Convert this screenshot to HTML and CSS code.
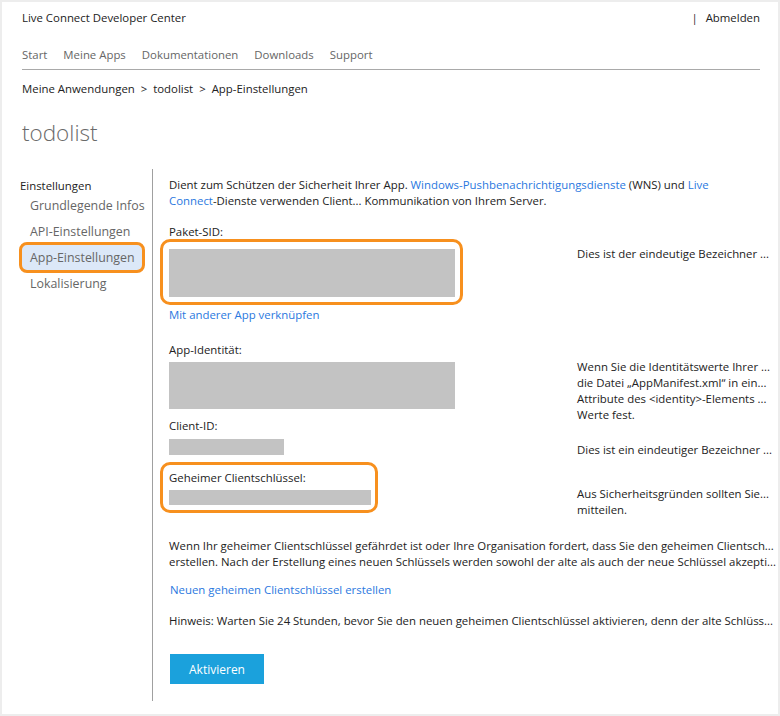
FILE: index.html
```html
<!DOCTYPE html>
<html lang="de">
<head>
<meta charset="utf-8">
<title>todolist - App-Einstellungen</title>
<link rel="stylesheet" href="styles.css">
</head>
<body>
<div class="frame">
  <header class="top">
    <span class="brand">Live Connect Developer Center</span>
    <span class="signout"><span class="sep">|</span>Abmelden</span>
  </header>
  <nav class="nav">
    <a>Start</a><a>Meine Apps</a><a>Dokumentationen</a><a>Downloads</a><a>Support</a>
  </nav>
  <div class="crumbs">Meine Anwendungen <span class="gt">&gt;</span> todolist <span class="gt">&gt;</span> App-Einstellungen</div>
  <h1 class="title">todolist</h1>
  <div class="main">
    <aside class="side">
      <div class="side-head">Einstellungen</div>
      <ul class="side-list">
        <li>Grundlegende Infos</li>
        <li>API-Einstellungen</li>
        <li class="active">App-Einstellungen</li>
        <li>Lokalisierung</li>
      </ul>
    </aside>
    <section class="content">
      <p class="intro">Dient zum Schützen der Sicherheit Ihrer App. <a class="link">Windows-Pushbenachrichtigungsdienste</a> (WNS) und <a class="link">Live<br>Connect</a>-Dienste verwenden Client... Kommunikation von Ihrem Server.</p>

      <div class="row row-sid">
        <div class="left">
          <div class="label">Paket-SID:</div>
          <div class="ring ring-sid"><div class="block block-lg"></div></div>
        </div>
        <p class="right right-sid">Dies ist der eindeutige Bezeichner ...</p>
      </div>
      <a class="link link-assoc">Mit anderer App verknüpfen</a>

      <div class="row row-ident">
        <div class="left">
          <div class="label">App-Identität:</div>
          <div class="block block-ident"></div>
        </div>
        <p class="right right-ident">Wenn Sie die Identitätswerte Ihrer ...<br>die Datei „AppManifest.xml“ in ein...<br>Attribute des &lt;identity&gt;-Elements ...<br>Werte fest.</p>
      </div>

      <div class="row row-client">
        <div class="left">
          <div class="label">Client-ID:</div>
          <div class="block block-client"></div>
        </div>
        <p class="right right-client">Dies ist ein eindeutiger Bezeichner ...</p>
      </div>

      <div class="row row-secret">
        <div class="left">
          <div class="ring ring-secret">
            <div class="label">Geheimer Clientschlüssel:</div>
            <div class="block block-secret"></div>
          </div>
        </div>
        <p class="right right-secret">Aus Sicherheitsgründen sollten Sie...<br>mitteilen.</p>
      </div>

      <p class="para">Wenn Ihr geheimer Clientschlüssel gefährdet ist oder Ihre Organisation fordert, dass Sie den geheimen Clientsch...<br>erstellen. Nach der Erstellung eines neuen Schlüssels werden sowohl der alte als auch der neue Schlüssel akzepti...</p>
      <a class="link link-new">Neuen geheimen Clientschlüssel erstellen</a>
      <p class="note">Hinweis: Warten Sie 24 Stunden, bevor Sie den neuen geheimen Clientschlüssel aktivieren, denn der alte Schlüss...</p>
      <button class="btn" type="button">Aktivieren</button>
    </section>
  </div>
</div>
</body>
</html>
```
FILE: styles.css
```css
* { box-sizing: border-box; }
html, body { margin: 0; padding: 0; background: #fff; }
p { margin: 0; }
body {
  font-family: "Open Sans", "Noto Sans", sans-serif;
  font-size: 11.4px;
  color: #222;
}
.frame {
  width: 780px;
  height: 716px;
  border: 2px solid #ededed;
  overflow: hidden;
}
.top {
  display: flex;
  justify-content: space-between;
  padding: 6px 18px 0 20px;
  line-height: 20px;
}
.sep { margin-right: 8px; color: #333; }
.nav {
  display: flex;
  gap: 16px;
  margin: 17px 18px 0 20px;
  padding-bottom: 4px;
  border-bottom: 1px solid #a9a9a9;
  line-height: 20px;
  color: #666;
}
.crumbs {
  margin: 9px 0 0 20px;
  line-height: 20px;
  color: #222;
}
.gt { margin: 0 3px; }
.title {
  margin: 18px 0 0 20px;
  font-size: 22.5px;
  font-weight: 300;
  line-height: 32px;
  color: #6a6a6a;
}
.main {
  display: flex;
  margin-top: 20px;
  height: 532px;
}
.side {
  flex: none;
  width: 151px;
  padding: 8px 0 0 18px;
  border-right: 1px solid #a0a0a0;
  white-space: nowrap;
}
.side-head {
  line-height: 18px;
  color: #222;
}
.side-list {
  list-style: none;
  margin: -2px 0 0 0;
  padding: 0;
}
.side-list li {
  line-height: 26px;
  padding-left: 10px;
  font-size: 12.4px;
  color: #666;
}
.side-list li.active {
  position: relative;
  margin-left: 2px;
  padding-left: 8px;
  width: 120px;
  background: #dce8f8;
  border-radius: 4px;
}
.side-list li.active::after {
  content: "";
  position: absolute;
  top: -3px; left: -3px; right: -3px; bottom: -2px;
  border: 3px solid #f7901e;
  border-radius: 8px;
}
.content {
  flex: 1;
  min-width: 0;
  overflow: hidden;
  padding: 8px 0 0 16px;
  line-height: 16px;
  white-space: nowrap;
}
.link { color: #2a78e0; text-decoration: none; }
.row { display: flex; align-items: flex-start; }
.left { width: 408px; flex: none; }
.label { line-height: 16px; }
.block { background: #c3c3c3; }
.ring { position: relative; }
.ring::after {
  content: "";
  position: absolute;
  border: 3px solid #f7901e;
  border-radius: 10px;
}
.row-sid { margin-top: 15px; }
.ring-sid { margin-top: 9px; width: 286px; }
.ring-sid::after { top: -10px; left: -9px; right: -8px; bottom: -8px; }
.block-lg { height: 48px; }
.right-sid { margin-top: 22px; }
.link-assoc { display: block; margin-top: 10px; width: max-content; }
.row-ident { margin-top: 19px; }
.block-ident { margin-top: 4px; width: 286px; height: 47px; }
.right-ident { margin-top: 17px; margin-bottom: -14px; }
.row-client { margin-top: 9px; }
.block-client { margin-top: 5px; width: 115px; height: 16px; }
.right-client { margin-top: 24px; margin-bottom: -4px; }
.row-secret { margin-top: 15px; }
.ring-secret { width: 202px; }
.ring-secret::after { top: -8px; left: -9px; right: -7px; bottom: -8px; }
.block-secret { margin-top: 4px; height: 15px; }
.right-secret { margin-top: 16px; }
.para { margin-top: 20px; }
.link-new { display: block; margin: 12px 0 0 1px; width: max-content; }
.note { margin-top: 15px; }
.btn {
  display: block;
  margin: 25px 0 0 1px;
  width: 94px;
  height: 30px;
  border: 0;
  background: #1ba1dc;
  color: #fff;
  font-family: inherit;
  font-size: 12px;
  padding: 0;
}
```
